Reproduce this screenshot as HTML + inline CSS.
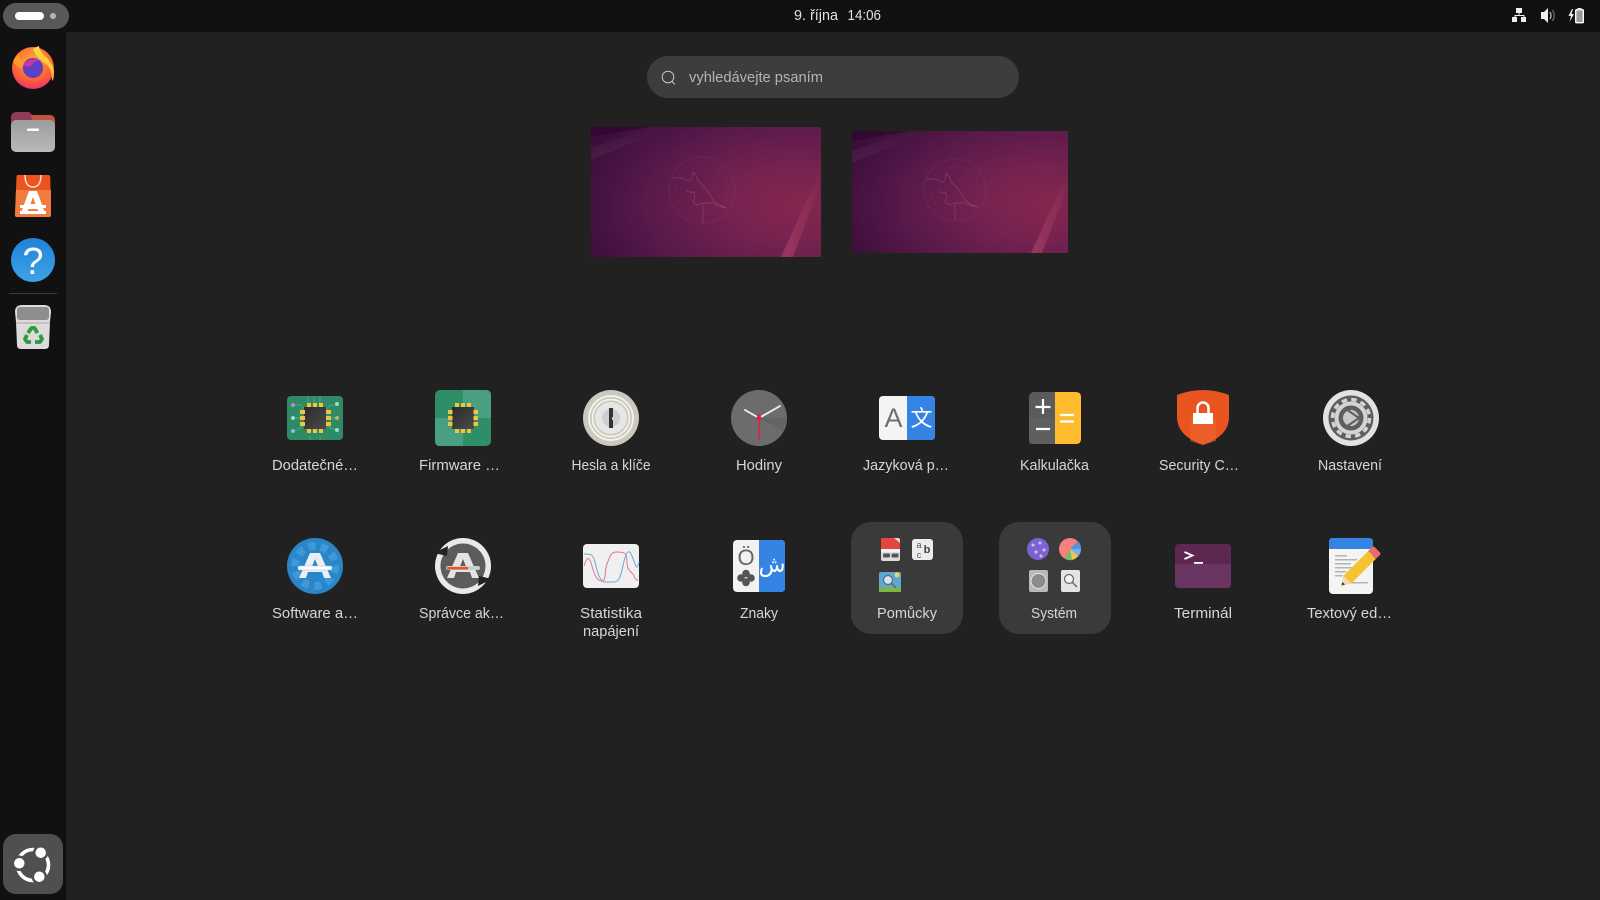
<!DOCTYPE html>
<html><head><meta charset="utf-8"><title>Ubuntu</title>
<style>
html,body{margin:0;padding:0;background:#212121;width:1600px;height:900px;overflow:hidden}
svg{display:block}
text{font-family:"Liberation Sans",sans-serif}
.l{font-size:14.5px;fill:#d6d6d6}
</style></head><body>
<svg width="1600" height="900" viewBox="0 0 1600 900" xmlns="http://www.w3.org/2000/svg">
<defs>
<radialGradient id="wp" cx=".9" cy=".6" r="1"><stop offset="0" stop-color="#84264f"/><stop offset=".3" stop-color="#76224f"/><stop offset=".65" stop-color="#581a4a"/><stop offset="1" stop-color="#3c0e3a"/></radialGradient>
<linearGradient id="wedge" x1="0" y1="1" x2="1" y2="0"><stop offset="0" stop-color="#b04468" stop-opacity=".65"/><stop offset="1" stop-color="#b04468" stop-opacity="0"/></linearGradient>
<linearGradient id="streak" x1="0" y1="1" x2="1" y2="0"><stop offset="0" stop-color="#fff" stop-opacity=".05"/><stop offset="1" stop-color="#fff" stop-opacity="0"/></linearGradient>
<radialGradient id="ff" cx=".5" cy=".3" r=".8"><stop offset="0" stop-color="#ffa52e"/><stop offset=".6" stop-color="#ff6336"/><stop offset="1" stop-color="#e8207e"/></radialGradient>
<linearGradient id="fl" x1="0" y1="0" x2="0" y2="1"><stop offset="0" stop-color="#ffe14a"/><stop offset="1" stop-color="#ffa124"/></linearGradient>
<linearGradient id="ho" x1="0" y1="0" x2="0" y2="1"><stop offset="0" stop-color="#1f83d8"/><stop offset="1" stop-color="#3fa2e6"/></linearGradient>
<linearGradient id="gr" x1="0" y1="0" x2="0" y2="1"><stop offset="0" stop-color="#9c9c9c"/><stop offset="1" stop-color="#bababa"/></linearGradient>
<linearGradient id="ch" x1="0" y1="0" x2="1" y2="1"><stop offset="0" stop-color="#2b2b2b"/><stop offset="1" stop-color="#4a4a4a"/></linearGradient>
<clipPath id="c1"><rect x="591" y="127" width="230" height="130"/></clipPath>
<clipPath id="c2"><rect x="852" y="131" width="216" height="122"/></clipPath>
</defs>
<rect width="1600" height="900" fill="#212121"/>
<rect width="1600" height="32" fill="#111"/>
<rect width="66" height="900" fill="#111"/>

<!-- top bar -->
<rect x="3" y="3" width="66" height="26" rx="13" fill="#585858"/>
<rect x="15" y="12" width="29" height="8" rx="4" fill="#fff"/>
<circle cx="53" cy="16" r="3" fill="#b4b4b4"/>
<text x="794" y="20" font-size="14.5" fill="#e2e2e2" textLength="44" lengthAdjust="spacingAndGlyphs">9. října</text>
<text x="847.5" y="20" font-size="14.5" fill="#e2e2e2" textLength="33.5" lengthAdjust="spacingAndGlyphs">14:06</text>
<g fill="#eee">
<rect x="1516" y="8" width="6" height="5"/><rect x="1512" y="17" width="5" height="5"/><rect x="1521" y="17" width="5" height="5"/>
<path d="M1518.500 13h1v2h5v2h-1v-1h-8v1h-1v-2h4z"/>
<path d="M1541 12h3l4-4v15l-4-4h-3z"/>
<path d="M1550 12q2 3.500 0 7" fill="none" stroke="#aaa" stroke-width="1.400"/><path d="M1552.500 10q3.500 5.500 0 11" fill="none" stroke="#666" stroke-width="1.400"/>
<path d="M1572 9l-3.500 7h2.500l-1.500 6 4.500-8h-2.500l1.500-5z"/>
<rect x="1575.700" y="9.700" width="7.600" height="13" rx="1" fill="#999" stroke="#fff" stroke-width="1.400"/><rect x="1577.500" y="8" width="4" height="2"/>
</g>

<!-- search -->
<rect x="647" y="56" width="372" height="42" rx="21" fill="#3d3d3d"/>
<circle cx="668" cy="77" r="5.800" fill="none" stroke="#c8c8c8" stroke-width="1"/>
<path d="M672 81.500l3 3" stroke="#c8c8c8" stroke-width="1"/>
<text x="689" y="82" font-size="14.500" fill="#b4b4b4" textLength="134" lengthAdjust="spacingAndGlyphs">vyhledávejte psaním</text>

<!-- workspace thumbs -->
<g clip-path="url(#c1)">
<rect x="591" y="127" width="230" height="130" fill="url(#wp)"/>
<path d="M591 137L650 127H591z" fill="#2f0630" opacity=".8"/><path d="M591 148L652 127h20L591 160z" fill="url(#streak)"/>
<path d="M781 257L821 168v14L793 257z" fill="url(#wedge)"/>
<circle cx="702" cy="190" r="33" fill="none" stroke="#fff" stroke-opacity=".09" stroke-width="1" stroke-dasharray="1.500 1.500"/>
<circle cx="702" cy="190" r="26" fill="none" stroke="#fff" stroke-opacity=".05" stroke-width="1" stroke-dasharray="2 3"/>
<path d="M672 178q12-1 16 3 5 0 5-9 4 3 5 9 10 8 15 19 5 5 14 8-10-1-14-5h-10l-6 2-4-3q3-6 1-10-5 1-8-2M703 205v18" fill="none" stroke="#fff" stroke-opacity=".13" stroke-width=".9"/>
</g>
<g clip-path="url(#c2)">
<rect x="852" y="131" width="216" height="122" fill="url(#wp)"/>
<path d="M852 141L908 131H852z" fill="#2f0630" opacity=".8"/><path d="M852 151L910 131h20L852 163z" fill="url(#streak)"/>
<path d="M1031 253L1068 172v14L1042 253z" fill="url(#wedge)"/>
<circle cx="955" cy="190" r="31" fill="none" stroke="#fff" stroke-opacity=".09" stroke-width="1" stroke-dasharray="1.500 1.500"/>
<circle cx="955" cy="190" r="24" fill="none" stroke="#fff" stroke-opacity=".05" stroke-width="1" stroke-dasharray="2 3"/>
<path d="M926 179q11-1 15 3 5 0 5-9 4 3 5 9 9 7 14 18 5 5 13 7-9-1-13-4h-10l-6 2-4-3q3-6 1-9-5 1-7-2M955 203v17" fill="none" stroke="#fff" stroke-opacity=".13" stroke-width=".9"/>
</g>

<!-- dock: firefox -->
<circle cx="33" cy="68" r="21" fill="url(#ff)"/>
<path d="M33 49q3-2 6-3 0 5 6 10 9 8 9 17 0 7-2 8 0-14-8-18-7-4-11-14z" fill="url(#fl)"/>
<path d="M38 47q2 6 7 10 8 7 9 16-5-8-8-12-5-3-8-14z" fill="#ffd23f"/>
<path d="M13 62q3-6 6-8 0 5 3 6 4-3 9-2-8 3-9 10-5 0-9-6z" fill="#ff9a2a"/>
<circle cx="33" cy="68" r="10" fill="#5f3fc6"/>
<path d="M23 65q8-9 19-4-6-1-9 2-1 3-4 3-3 1-6-1z" fill="#d038a0"/>
<!-- files -->
<path d="M11 118q0-6 6-6h11q2 0 4 3h17q6 0 6 6v10H11z" fill="#8f3c58"/>
<path d="M31 115h18q6 0 6 6v9H35z" fill="#c2553f"/>
<rect x="11" y="120" width="44" height="32" rx="5" fill="url(#gr)"/>
<rect x="27" y="128.500" width="12" height="2.500" rx="1" fill="#fff"/>
<!-- app store -->
<path d="M18 175h30q2 0 2.300 2L51 215q0 2-2 2H17q-2 0-2-2l1.500-38q0-2 1.500-2z" fill="#e95420"/>
<path d="M16 190h35l0 25q0 2-2 2H17q-2 0-2-2z" fill="#f27c40"/>
<path d="M25 175q0 12 8 12t8-12" fill="none" stroke="#fde3d3" stroke-width="1.400"/>
<path d="M29 191h8l8 22h-6l-1.500-4h-9l-1.500 4h-6zM33 197l-2.500 7h5z" fill="#fff" fill-rule="evenodd"/>
<rect x="20" y="205" width="26" height="3" fill="#fff"/>
<rect x="20" y="211" width="26" height="3" fill="#fff"/>
<!-- help -->
<circle cx="33" cy="260" r="22" fill="url(#ho)"/>
<text x="33" y="274" text-anchor="middle" font-size="38" fill="#fff">?</text>
<rect x="9" y="293" width="48" height="1" fill="#3c3c3c"/>
<!-- trash -->
<path d="M15 312q0-7 7-7h22q7 0 7 7l-1 10-1 23q0 4-4 4H21q-4 0-4-4l-1-23z" fill="#dcdcdc"/>
<rect x="17" y="307" width="32" height="13" rx="3" fill="#8e8e8e"/>
<path d="M16 323h34" stroke="#a8a8a8"/>
<g fill="none" stroke="#2f9a3c" stroke-width="3.800" stroke-linejoin="round">
<path d="M28 333l3.500-5h3l3 5"/><path d="M40 335l2 4-2 3h-5"/><path d="M31 342h-4l-2-3 2-4"/></g>
<!-- grid tile -->
<rect x="3" y="834" width="60" height="60" rx="13" fill="#4f4f4f"/>
<circle cx="33" cy="865" r="15.500" fill="none" stroke="#fff" stroke-width="3.600"/>
<g fill="#fff" stroke="#4f4f4f" stroke-width="2.500"><circle cx="40.700" cy="852.700" r="6.500"/><circle cx="19.300" cy="863.300" r="6.500"/><circle cx="39.300" cy="876.700" r="6.500"/></g>

<!-- Dodatecne -->
<rect x="287" y="396" width="56" height="44" rx="4" fill="#2e8b66"/>
<g stroke="#55ab89" fill="none" stroke-width="1" opacity=".8"><path d="M308 396v8M314 396v8M320 396v8M293 418h8M329 418h8M295 405h6l3 4M335 405h-5l-3 4M295 431l8-5M335 430l-8-4M310 436v4M320 436v4"/></g>
<g fill="#a9d8c4"><circle cx="293" cy="405" r="2" fill="#b58ec0"/><circle cx="337" cy="404" r="2"/><circle cx="293" cy="418" r="2"/><circle cx="337" cy="418" r="2" fill="#b9b46c"/><circle cx="293" cy="431" r="2" fill="#8fb8d8"/><circle cx="337" cy="430" r="2"/></g>
<rect x="304" y="407" width="22" height="22" fill="url(#ch)"/>
<g fill="#f4c33b"><rect x="307" y="403" width="4" height="4"/><rect x="313" y="403" width="4" height="4"/><rect x="319" y="403" width="4" height="4"/><rect x="307" y="429" width="4" height="4"/><rect x="313" y="429" width="4" height="4"/><rect x="319" y="429" width="4" height="4"/><rect x="300" y="410" width="5" height="4"/><rect x="300" y="416" width="5" height="4"/><rect x="300" y="422" width="5" height="4"/><rect x="326" y="410" width="5" height="4"/><rect x="326" y="416" width="5" height="4"/><rect x="326" y="422" width="5" height="4"/></g>

<!-- Firmware -->
<rect x="435" y="390" width="56" height="56" rx="5" fill="#2d8e67"/>
<path d="M463 390h23q5 0 5 5v23h-28z" fill="#4a9f80"/><path d="M435 418h28v28h-23q-5 0-5-5z" fill="#4a9f80"/>
<rect x="452" y="407" width="22" height="22" fill="url(#ch)"/>
<g fill="#f4c33b"><rect x="455" y="403" width="4" height="4"/><rect x="461" y="403" width="4" height="4"/><rect x="467" y="403" width="4" height="4"/><rect x="455" y="429" width="4" height="4"/><rect x="461" y="429" width="4" height="4"/><rect x="467" y="429" width="4" height="4"/><rect x="448" y="410" width="4.500" height="4"/><rect x="448" y="416" width="4.500" height="4"/><rect x="448" y="422" width="4.500" height="4"/><rect x="473.500" y="410" width="4.500" height="4"/><rect x="473.500" y="416" width="4.500" height="4"/><rect x="473.500" y="422" width="4.500" height="4"/></g>

<!-- Hesla -->
<circle cx="611" cy="418" r="28" fill="#cbc8bd"/>
<circle cx="611" cy="418" r="22" fill="none" stroke="#f2f2ee" stroke-width="1.800"/>
<circle cx="611" cy="418" r="18.500" fill="none" stroke="#f2f2ee" stroke-width="1.800"/>
<circle cx="611" cy="418" r="16" fill="#e6e6e6"/>
<circle cx="611" cy="418" r="9" fill="#cfcfcf"/>
<path d="M609 408h4v9h-1v3h1v8h-4z" fill="#333"/>

<!-- Hodiny -->
<circle cx="759" cy="418" r="28" fill="#6c6c6c"/>
<path d="M759 418l25 13a28 28 0 0 0 3-13z" fill="#646464"/>
<path d="M759 418L780 406M759 418L745 410" stroke="#f2f2f2" stroke-width="1.800" stroke-linecap="round"/>
<path d="M759 414V440" stroke="#e02040" stroke-width="1.500"/><circle cx="759" cy="418" r="2.500" fill="#e02040"/>

<!-- Jazyk -->
<rect x="879" y="396" width="56" height="44" rx="4" fill="#f4f4f2"/>
<path d="M907 396h24q4 0 4 4v36q0 4-4 4h-24z" fill="#3584e4"/>
<text x="893.500" y="427" text-anchor="middle" font-size="27" fill="#707070">A</text>
<text x="921.500" y="426" text-anchor="middle" font-size="22" fill="#fff" style='font-family:"Noto Sans CJK SC",sans-serif'>文</text>

<!-- Kalk -->
<rect x="1029" y="392" width="52" height="52" rx="5" fill="#5b5b5b"/>
<path d="M1055 392h21q5 0 5 5v42q0 5-5 5h-21z" fill="#fdbb2d"/>
<rect x="1029" y="418" width="26" height="26" fill="#636363" opacity=".6"/>
<path d="M1043 399v15M1035.500 407h15M1036 429h14M1060 415h14M1060 421.500h14" stroke="#fff" stroke-width="2.200"/>

<!-- Security -->
<path d="M1203 390q13 0 26 5v22q0 19-26 28-26-9-26-28v-22q13-5 26-5z" fill="#e95420"/>
<path d="M1190 418h26v23l-13 4-13-4z" fill="#ee6a33" opacity=".45"/>
<path d="M1197.500 414v-6a5.500 5.500 0 0 1 11 0v6" fill="none" stroke="#fff" stroke-width="2.500"/>
<rect x="1193" y="413" width="20" height="11" fill="#fff"/>

<!-- Nastaveni -->
<circle cx="1351" cy="418" r="28" fill="#e2e2e2"/>
<circle cx="1351" cy="418" r="22.500" fill="#5e5e5e"/>
<circle cx="1351" cy="418" r="18.500" fill="none" stroke="#d4d4d4" stroke-width="3.500" stroke-dasharray="5.500 4.200"/>
<circle cx="1351" cy="418" r="14.500" fill="none" stroke="#d4d4d4" stroke-width="4"/>
<circle cx="1351" cy="418" r="8" fill="#c8c8c8"/>
<path d="M1346 409l13 9-13 9" fill="none" stroke="#5e5e5e" stroke-width="2"/>

<!-- Software -->
<circle cx="315" cy="566" r="28" fill="#2a86c8"/>
<circle cx="315" cy="566" r="20" fill="none" stroke="#3f99d8" stroke-width="8" stroke-dasharray="7 5.500"/>
<path d="M310 553h10l11 25h-7l-2-6h-14l-2 6h-7zM315 559l-4 10h8z" fill="#e8eef2" fill-rule="evenodd"/>
<rect x="298" y="566" width="34" height="4" rx="2" fill="#fff" stroke="#a8c8de" stroke-width=".6"/>

<!-- Spravce -->
<circle cx="463" cy="566" r="28" fill="#e9e9e9"/>
<circle cx="463" cy="566" r="22.500" fill="#5c5c5c"/>
<path d="M434 553l14-7-1 10zM492 579l-14 7 1-10z" fill="#222"/>
<path d="M458 553h10l11 25h-7l-2-6h-14l-2 6h-7zM463 559l-4 10h8z" fill="#e4e4e4" fill-rule="evenodd"/>
<rect x="446" y="566" width="34" height="4" rx="2" fill="#ccc"/>
<rect x="447" y="567" width="21" height="2.500" fill="#e95420"/>

<!-- Statistika -->
<rect x="583" y="544" width="56" height="44" rx="4" fill="#f0f0f0"/>
<path d="M584 554c7 0 9 0 11 8s4 18 9 20h9c6 0 7-4 9-12s3-16 6-18 5 8 8 14c1 3 2 0 3-4" fill="none" stroke="#6aa7dc" stroke-width="1"/>
<path d="M584 566c3-10 5-9 7-3s4 17 10 18 3-10 6-17 3-12 10-12 10 0 10 10 5 9 7 14 3 4 4 4" fill="none" stroke="#d97a8c" stroke-width="1"/>

<!-- Znaky -->
<rect x="733" y="540" width="52" height="52" rx="4" fill="#f2f2f0"/>
<path d="M759 540h22q4 0 4 4v44q0 4-4 4h-22z" fill="#3584e4"/>
<text x="746" y="565" text-anchor="middle" font-size="22" fill="#666">Ö</text>
<g fill="#555"><circle cx="746" cy="573.500" r="3.800"/><circle cx="746" cy="582.500" r="3.800"/><circle cx="741" cy="578" r="3.800"/><circle cx="751" cy="578" r="3.800"/><rect x="745.300" y="578" width="1.400" height="8"/></g>
<text x="772" y="572" text-anchor="middle" font-size="22" fill="#fff" style='font-family:"DejaVu Sans",sans-serif'>ش</text>

<!-- folders -->
<rect x="851" y="522" width="112" height="112" rx="20" fill="#3a3a3a"/>
<rect x="999" y="522" width="112" height="112" rx="20" fill="#3a3a3a"/>
<rect x="881" y="538" width="19" height="23" rx="2" fill="#dcdcdc"/>
<path d="M881 540q0-2 2-2h11l6 5v6h-19z" fill="#e6453c"/>
<rect x="881" y="549" width="19" height="3" fill="#f4f4f4"/>
<g fill="#555"><rect x="883" y="553.500" width="7" height="4" rx="1"/><rect x="891.500" y="553.500" width="7" height="4" rx="1"/></g>
<rect x="912" y="539" width="21" height="21" rx="3" fill="#ececec"/>
<text x="919" y="548" font-size="9" fill="#555" text-anchor="middle">a</text>
<text x="919" y="558" font-size="9" fill="#555" text-anchor="middle">c</text>
<text x="927" y="553" font-size="11" font-weight="bold" fill="#444" text-anchor="middle">b</text>
<rect x="879" y="572" width="22" height="20" rx="2" fill="#5aa8d8"/>
<rect x="879" y="587" width="22" height="5" fill="#7ab648"/>
<circle cx="897" cy="575" r="2.500" fill="#f5d547"/>
<circle cx="888" cy="580" r="4.500" fill="#cfe6f2" stroke="#666" stroke-width="1.200"/>
<path d="M891 583l5 5" stroke="#666" stroke-width="1.500"/>

<circle cx="1038" cy="549" r="11" fill="#7d63cf"/>
<g fill="#cfc4f0"><circle cx="1033" cy="545" r="1.500"/><circle cx="1040" cy="543" r="1.500"/><circle cx="1044" cy="550" r="1.500"/><circle cx="1036" cy="552" r="1.500"/><circle cx="1041" cy="556" r="1.500"/></g>
<circle cx="1070" cy="549" r="11" fill="#f5807c"/>
<path d="M1070 549l8-8a11 11 0 0 1 3 8z" fill="#5a8fe0"/><path d="M1070 549h11a11 11 0 0 1-3 7z" fill="#6fb3e8"/><path d="M1070 549l8 7a11 11 0 0 1-6 4z" fill="#e8c94c"/><path d="M1070 549l2 11a11 11 0 0 1-7-1z" fill="#6cc070"/>
<rect x="1029" y="570" width="19" height="22" rx="2" fill="#b8b8b8"/>
<circle cx="1038.500" cy="581" r="7.500" fill="#8c8c8c" stroke="#e8e8e8" stroke-width="1"/>
<rect x="1061" y="570" width="19" height="22" rx="2" fill="#e4e4e4"/>
<circle cx="1069" cy="579" r="4.500" fill="#f4f4f4" stroke="#666" stroke-width="1.200"/>
<path d="M1072 582l5 5" stroke="#666" stroke-width="1.500"/>

<!-- Terminal -->
<rect x="1175" y="544" width="56" height="44" rx="4" fill="#5e2750"/>
<path d="M1175 564h56v20q0 4-4 4h-48q-4 0-4-4z" fill="#6a3560"/>
<path d="M1184.500 552l8 3.500-8 3.500" fill="none" stroke="#fff" stroke-width="1.800"/>
<rect x="1194" y="562" width="9" height="1.800" fill="#fff"/>

<!-- Text editor -->
<rect x="1329" y="538" width="44" height="56" rx="4" fill="#f4f4f4"/>
<path d="M1329 549v-7q0-4 4-4h36q4 0 4 4v7z" fill="#3584e4"/>
<g fill="#b4b4b4"><rect x="1335" y="555" width="12" height="1.500"/><rect x="1335" y="559" width="22" height="1.500"/><rect x="1335" y="563" width="16" height="1.500"/><rect x="1335" y="567" width="18" height="1.500"/><rect x="1335" y="571" width="11" height="1.500"/><rect x="1335" y="575" width="8" height="1.500"/><rect x="1345" y="582" width="23" height="1.500"/></g>
<path d="M1343.500 575.700L1368.100 551.100L1375.900 558.900L1351.300 583.500z" fill="#f5c32f"/>
<path d="M1343.500 575.700L1351.300 583.500L1341 586z" fill="#f2dcae"/>
<path d="M1341.500 585.500l1-3.500 2.500 2.500z" fill="#333"/>
<path d="M1368.100 551.100L1372 547q1-1 2.500 0l5.500 5.500q1 1.500 0 2.500l-4.100 3.900z" fill="#ea6a70"/>

<!-- labels -->
<text class="l" y="470" x="272" textLength="86" lengthAdjust="spacingAndGlyphs">Dodatečné…</text>
<text class="l" y="470" x="419" textLength="81" lengthAdjust="spacingAndGlyphs">Firmware …</text>
<text class="l" y="470" x="571.500" textLength="79" lengthAdjust="spacingAndGlyphs">Hesla a klíče</text>
<text class="l" y="470" x="736" textLength="46" lengthAdjust="spacingAndGlyphs">Hodiny</text>
<text class="l" y="470" x="863" textLength="86" lengthAdjust="spacingAndGlyphs">Jazyková p…</text>
<text class="l" y="470" x="1020" textLength="69" lengthAdjust="spacingAndGlyphs">Kalkulačka</text>
<text class="l" y="470" x="1159" textLength="80" lengthAdjust="spacingAndGlyphs">Security C…</text>
<text class="l" y="470" x="1318" textLength="64" lengthAdjust="spacingAndGlyphs">Nastavení</text>
<text class="l" y="618" x="272" textLength="86" lengthAdjust="spacingAndGlyphs">Software a…</text>
<text class="l" y="618" x="419" textLength="85" lengthAdjust="spacingAndGlyphs">Správce ak…</text>
<text class="l" y="618" x="580" textLength="62" lengthAdjust="spacingAndGlyphs">Statistika</text>
<text class="l" y="636" x="583" textLength="56" lengthAdjust="spacingAndGlyphs">napájení</text>
<text class="l" y="618" x="740" textLength="38" lengthAdjust="spacingAndGlyphs">Znaky</text>
<text class="l" y="618" x="877" textLength="60" lengthAdjust="spacingAndGlyphs">Pomůcky</text>
<text class="l" y="618" x="1031" textLength="46" lengthAdjust="spacingAndGlyphs">Systém</text>
<text class="l" y="618" x="1174" textLength="58" lengthAdjust="spacingAndGlyphs">Terminál</text>
<text class="l" y="618" x="1307" textLength="85" lengthAdjust="spacingAndGlyphs">Textový ed…</text>
</svg>
</body></html>
